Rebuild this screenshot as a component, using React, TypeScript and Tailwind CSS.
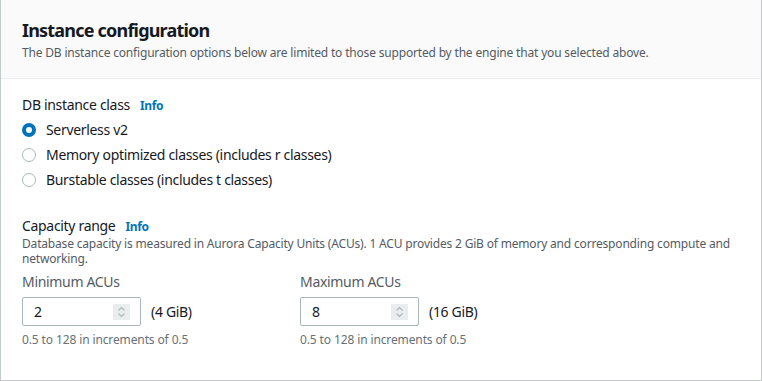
import React from 'react';

const font = { fontFamily: '"Noto Sans", "Open Sans", Arial, sans-serif' };

function Radio({ label, checked }: { label: string; checked?: boolean }) {
  return (
    <label className="flex items-center h-[25px]">
      {checked ? (
        <span className="w-[14px] h-[14px] rounded-full border-[4px] border-[#0073bb] bg-white" />
      ) : (
        <span className="w-[14px] h-[14px] rounded-full border-[1.5px] border-[#aab7b8] bg-white" />
      )}
      <span className="ml-[10px] text-[14px] text-[#16191f]">{label}</span>
    </label>
  );
}

function AcuInput({ label, value, gib }: { label: string; value: string; gib: string }) {
  return (
    <div className="flex flex-col">
      <div className="text-[14px] leading-[20px] text-[#545b64]">{label}</div>
      <div className="mt-[5px] flex items-center">
        <div className="w-[119px] h-[29px] border border-[#aab7b8] rounded-[2px] flex items-center justify-between pl-[11px] pr-[10px]">
          <span className="text-[14px] text-[#16191f]">{value}</span>
          <span className="w-[17px] h-[16px] bg-[#eaeded] flex items-center justify-center">
            <svg width="9" height="12" viewBox="0 0 9 12" fill="none" stroke="#aab7b8" strokeWidth="1.2">
              <path d="M1.5 4.5 L4.5 1.5 L7.5 4.5" />
              <path d="M1.5 7.5 L4.5 10.5 L7.5 7.5" />
            </svg>
          </span>
        </div>
        <span className="ml-[10px] text-[14px] text-[#16191f]">{gib}</span>
      </div>
      <div className="mt-[6px] text-[12px] leading-[16px] tracking-[-0.01em] text-[#687078]">0.5 to 128 in increments of 0.5</div>
    </div>
  );
}

export default function App() {
  return (
    <div className="w-[762px] h-[381px] bg-white tracking-[-0.02em]" style={font}>
      <div className="border-x border-b border-[#c4cacb] shadow-[0_1px_1px_0_rgba(0,28,36,0.2)] bg-white">
        {/* Header */}
        <div className="bg-[#fafafa] border-b border-[#eaeded] px-[21px] pt-[18px] h-[79px]">
          <h2 className="text-[18px] leading-[24px] font-bold text-[#16191f] tracking-[-0.8px]">Instance configuration</h2>
          <p className="mt-[3px] text-[12px] leading-[16px] tracking-[-0.015em] text-[#545b64]">
            The DB instance configuration options below are limited to those supported by the engine that you selected above.
          </p>
        </div>

        {/* Body */}
        <div className="px-[21px] pt-[16px] pb-[32px]">
          <div className="flex items-baseline">
            <span className="text-[14px] leading-[20px] text-[#16191f]">DB instance class</span>
            <span className="ml-[10px] text-[12px] font-bold text-[#0073bb]">Info</span>
          </div>
          <div className="mt-[2px] flex flex-col">
            <Radio label="Serverless v2" checked />
            <Radio label="Memory optimized classes (includes r classes)" />
            <Radio label="Burstable classes (includes t classes)" />
          </div>

          <div className="mt-[24px] flex items-baseline">
            <span className="text-[14px] leading-[20px] text-[#16191f]">Capacity range</span>
            <span className="ml-[10px] text-[12px] font-bold text-[#0073bb]">Info</span>
          </div>
          <p className="text-[12px] leading-[15px] tracking-[-0.015em] text-[#545b64]">
            Database capacity is measured in Aurora Capacity Units (ACUs). 1 ACU provides 2 GiB of memory and corresponding compute and networking.
          </p>
          <div className="mt-[6px] grid grid-cols-[278px_1fr]">
            <AcuInput label="Minimum ACUs" value="2" gib="(4 GiB)" />
            <AcuInput label="Maximum ACUs" value="8" gib="(16 GiB)" />
          </div>
        </div>
      </div>
    </div>
  );
}
